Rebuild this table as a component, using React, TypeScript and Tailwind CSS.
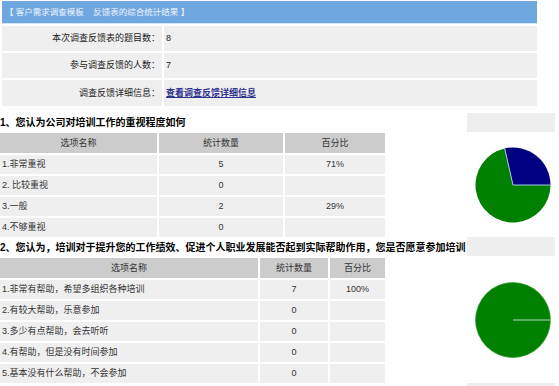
import React from "react";

const font = { fontFamily: '"Liberation Sans", "Noto Sans CJK SC", sans-serif' };

function Pie1() {
  // blue 2/7 from east counterclockwise
  const cx = 38, cy = 38, r = 37.5;
  const a = (2 / 7) * Math.PI * 2;
  const px = cx + r * Math.cos(a);
  const py = cy - r * Math.sin(a);
  return (
    <svg width="76" height="76" viewBox="0 0 76 76">
      <path d={`M${cx},${cy} L${px},${py} A${r},${r} 0 1 0 ${cx + r},${cy} Z`} fill="#008000" />
      <path d={`M${cx},${cy} L${cx + r},${cy} A${r},${r} 0 0 0 ${px},${py} Z`} fill="#000080" />
      <line x1={cx} y1={cy} x2={cx + r} y2={cy} stroke="#a9c4e6" strokeWidth="1" />
      <line x1={cx} y1={cy} x2={px} y2={py} stroke="#a9c4e6" strokeWidth="1" />
    </svg>
  );
}

function Pie2() {
  const cx = 38, cy = 38, r = 37.5;
  return (
    <svg width="76" height="76" viewBox="0 0 76 76">
      <circle cx={cx} cy={cy} r={r} fill="#008000" stroke="#2f9a2f" strokeWidth="0.6" />
      <line x1={cx} y1={cy} x2={cx + r} y2={cy} stroke="#b6dcb6" strokeWidth="1" />
    </svg>
  );
}

function PiePanel({ children }: { children: React.ReactNode }) {
  return (
    <div className="ml-[82px] w-[88px] flex flex-col">
      <div className="h-[19px] bg-[#eeeeee]" />
      <div className="flex-1 flex items-center justify-center pl-[4px]">{children}</div>
    </div>
  );
}

export default function App() {
  const t1 = [
    ["1.非常重视", "5", "71%"],
    ["2. 比较重视", "0", ""],
    ["3.一般", "2", "29%"],
    ["4.不够重视", "0", ""],
  ];
  const t2 = [
    ["1.非常有帮助，希望多组织各种培训", "7", "100%"],
    ["2.有较大帮助，乐意参加", "0", ""],
    ["3.多少有点帮助，会去听听", "0", ""],
    ["4.有帮助，但是没有时间参加", "0", ""],
    ["5.基本没有什么帮助，不会参加", "0", ""],
  ];
  return (
    <div className="w-[559px] h-[386px] bg-white overflow-hidden text-[#333333]" style={font}>
      <div className="pl-[2px] pt-[1px] w-[537px] flex flex-col gap-[2px]">
        <div className="h-[23px] bg-[#6fa7df] flex items-center pl-[3px] text-[8.5px] text-[#eef4ff] whitespace-pre border-b border-[#cfe6f7]">
          {"【 客户需求调查模板    反馈表的综合统计结果 】"}
        </div>
        {[
          ["本次调查反馈表的题目数：", "8"],
          ["参与调查反馈的人数：", "7"],
        ].map(([l, v]) => (
          <div key={l} className="flex gap-[2px] h-[25px] text-[9px] leading-none">
            <div className="w-[160px] bg-[#efefef] flex items-center justify-end pr-[2px] text-[#222]">{l}</div>
            <div className="flex-1 bg-[#efefef] flex items-center pl-[2px] text-[#222]">{v}</div>
          </div>
        ))}
        <div className="flex gap-[2px] h-[26px] text-[9px] leading-none">
          <div className="w-[160px] bg-[#efefef] flex items-center justify-end pr-[2px] text-[#222]">调查反馈详细信息：</div>
          <div className="flex-1 bg-[#efefef] flex items-center pl-[2px]">
            <span className="text-[#2e318f] underline font-bold">查看调查反馈详细信息</span>
          </div>
        </div>
      </div>

      <div className="mt-[7px] flex">
        <div className="w-[385px] flex flex-col">
          <div className="h-[20px] flex items-center text-[10px] font-bold text-black whitespace-nowrap leading-none">
            1、您认为公司对培训工作的重视程度如何
          </div>
          <div className="flex flex-col gap-[2px] text-[9px] leading-none">
            <div className="h-[20px] grid grid-cols-[157px_124px_100px] gap-x-[2px]">
              <div className="bg-[#cccccc] flex items-center justify-center">选项名称</div>
              <div className="bg-[#cccccc] flex items-center justify-center">统计数量</div>
              <div className="bg-[#cccccc] flex items-center justify-center">百分比</div>
            </div>
            {t1.map((r) => (
              <div key={r[0]} className="h-[19px] grid grid-cols-[157px_124px_100px] gap-x-[2px]">
                <div className="bg-[#efefef] flex items-center pl-[2px]">{r[0]}</div>
                <div className="bg-[#efefef] flex items-center justify-center">{r[1]}</div>
                <div className="bg-[#efefef] flex items-center justify-center">{r[2]}</div>
              </div>
            ))}
          </div>
        </div>
        <PiePanel>
          <Pie1 />
        </PiePanel>
      </div>

      <div className="flex">
        <div className="w-[385px] flex flex-col">
          <div className="relative z-10 h-[21px] flex items-center text-[10px] font-bold text-black whitespace-nowrap leading-none">
            2、您认为，培训对于提升您的工作绩效、促进个人职业发展能否起到实际帮助作用，您是否愿意参加培训
          </div>
          <div className="flex flex-col gap-[2px] text-[9px] leading-none">
            <div className="h-[20px] grid grid-cols-[258px_68px_55px] gap-x-[2px]">
              <div className="bg-[#cccccc] flex items-center justify-center">选项名称</div>
              <div className="bg-[#cccccc] flex items-center justify-center">统计数量</div>
              <div className="bg-[#cccccc] flex items-center justify-center">百分比</div>
            </div>
            {t2.map((r) => (
              <div key={r[0]} className="h-[19px] grid grid-cols-[258px_68px_55px] gap-x-[2px]">
                <div className="bg-[#efefef] flex items-center pl-[2px]">{r[0]}</div>
                <div className="bg-[#efefef] flex items-center justify-center">{r[1]}</div>
                <div className="bg-[#efefef] flex items-center justify-center">{r[2]}</div>
              </div>
            ))}
          </div>
        </div>
        <PiePanel>
          <Pie2 />
        </PiePanel>
      </div>

      <div className="flex">
        <div className="w-[385px]" />
        <div className="ml-[82px] w-[88px] h-[19px] bg-[#eeeeee]" />
      </div>
    </div>
  );
}
